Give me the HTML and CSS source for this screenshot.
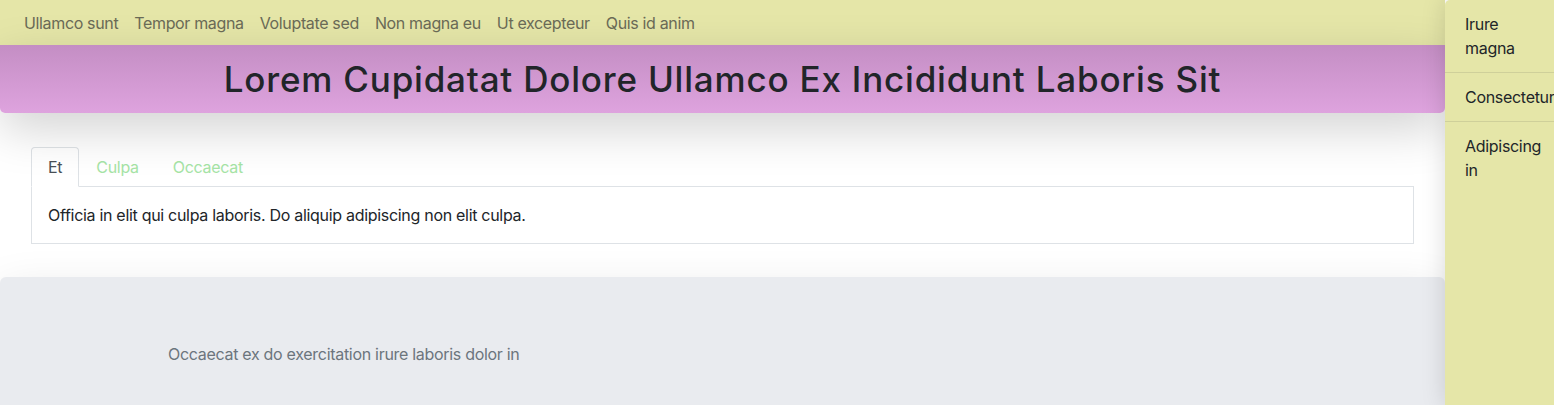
FILE: index.html
```html
<!DOCTYPE html>
<html lang="en">
<head>
<meta charset="utf-8">
<title>Lorem</title>
<link rel="stylesheet" href="styles.css">
</head>
<body>
<div class="layout">
  <div class="main">
    <nav class="topnav">
      <a class="topnav-link" href="#">Ullamco sunt</a>
      <a class="topnav-link" href="#">Tempor magna</a>
      <a class="topnav-link" href="#">Voluptate sed</a>
      <a class="topnav-link" href="#">Non magna eu</a>
      <a class="topnav-link" href="#">Ut excepteur</a>
      <a class="topnav-link" href="#">Quis id anim</a>
    </nav>
    <header class="hero">
      <h1 class="hero-title">Lorem Cupidatat Dolore Ullamco Ex Incididunt Laboris Sit</h1>
    </header>
    <section class="tabs-section">
      <ul class="tabs">
        <li class="tab tab-active">Et</li>
        <li class="tab">Culpa</li>
        <li class="tab">Occaecat</li>
      </ul>
      <div class="tab-panel">Officia in elit qui culpa laboris. Do aliquip adipiscing non elit culpa.</div>
    </section>
    <footer class="footer">
      <p class="footer-text">Occaecat ex do exercitation irure laboris dolor in</p>
    </footer>
  </div>
  <aside class="sidebar">
    <div class="side-item">Irure magna</div>
    <div class="side-item">Consectetur</div>
    <div class="side-item">Adipiscing in</div>
  </aside>
</div>
</body>
</html>
```
FILE: styles.css
```css
* { box-sizing: border-box; }
html, body { margin: 0; padding: 0; }
body {
  font-family: Inter, "Liberation Sans", sans-serif;
  font-size: 16px;
  line-height: 24px;
  letter-spacing: -0.3px;
  color: #212529;
  background: #fff;
  overflow: hidden;
  height: 405px;
}
.layout {
  display: flex;
  align-items: stretch;
  min-height: 405px;
}
.main {
  width: 1445px;
  flex: 0 0 1445px;
  display: flex;
  flex-direction: column;
}
.topnav {
  display: flex;
  height: 45px;
  padding: 0 16px;
  align-items: center;
  background: #e5e6a8;
}
.topnav-link {
  padding: 10px 8px;
  font-size: 16px;
  letter-spacing: -0.35px;
  color: #6b6b57;
  text-decoration: none;
}
.hero {
  position: relative;
  z-index: 1;
  height: 68px;
  display: flex;
  align-items: center;
  justify-content: center;
  background: linear-gradient(180deg, #c48ec4 0%, #dea3de 100%);
  border-radius: 0 0 5px 5px;
  box-shadow: 0 16px 48px rgba(0, 0, 0, 0.175);
}
.hero-title {
  margin: 0;
  font-size: 35px;
  line-height: 44px;
  font-weight: 500;
  letter-spacing: 0.8px;
  color: #212529;
}
.tabs-section {
  padding: 34px 31px 33px;
}
.tabs {
  display: flex;
  list-style: none;
  margin: 0;
  padding: 0;
  border-bottom: 1px solid #dee2e6;
}
.tab {
  padding: 8px 16px;
  margin-bottom: -1px;
  border: 1px solid transparent;
  border-radius: 4px 4px 0 0;
  color: #a6e4a6;
  line-height: 22px;
}
.tab-active {
  color: #495057;
  background: #fff;
  border-color: #dee2e6 #dee2e6 #fff;
}
.tab-panel {
  padding: 16px;
  border: 1px solid #dee2e6;
  border-top: 0;
  background: #fff;
}
.footer {
  flex: 1;
  background: #e9ebef;
  border-radius: 6px 6px 0 0;
  padding: 65px 168px 40px;
  box-shadow: 0 16px 48px rgba(0, 0, 0, 0.12);
}
.footer-text {
  margin: 0;
  color: #6c757d;
}
.sidebar {
  position: relative;
  z-index: 2;
  flex: 0 0 109px;
  width: 109px;
  background: #e5e6a8;
  border-radius: 5px 0 0 0;
  box-shadow: 0 0 24px rgba(0, 0, 0, 0.15);
  overflow: hidden;
}
.side-item {
  padding: 12px 27px 12px 20px;
  width: 129px;
  border-bottom: 1px solid #cfd09a;
  line-height: 24px;
}
.side-item:last-child { border-bottom: 0; }
```
